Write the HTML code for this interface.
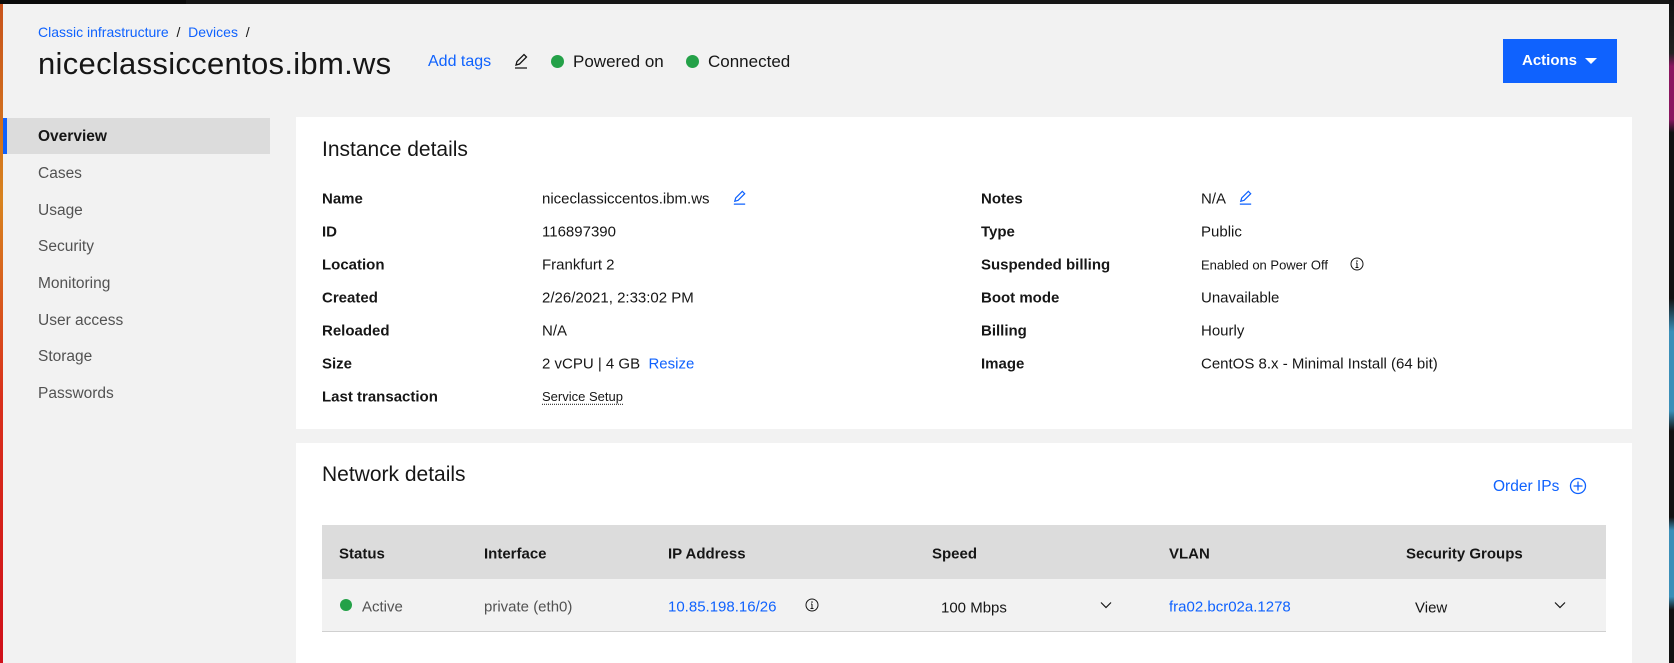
<!DOCTYPE html>
<html><head><meta charset="utf-8"><style>
*{margin:0;padding:0;box-sizing:border-box}
body{width:1674px;height:663px;overflow:hidden;background:#f2f2f2;font-family:"Liberation Sans",sans-serif;color:#161616;position:relative}
.a{position:absolute;white-space:nowrap}
.c{transform:translateY(-45%)}
.blue{color:#0f62fe}
.side{font-size:15.5px;color:#525252;left:38px}
.lbl{font-size:15px;font-weight:bold;left:322px}
.val{font-size:15px;left:542px}
.lbl2{font-size:15px;font-weight:bold;left:981px}
.val2{font-size:15px;left:1201px}
.th{font-size:15px;font-weight:bold}
.td{font-size:15px}
</style></head><body>
<div class="a" style="left:0;top:0;width:1674px;height:4px;background:#161616"></div>
<div class="a" style="left:0;top:0;width:186px;height:4px;background:#0b0b0b"></div>
<div class="a" style="left:0;top:4px;width:3px;height:659px;background:linear-gradient(#c8531c,#d8831f 30%,#d9301c 60%,#d0101a)"></div>
<div class="a" style="left:1669px;top:0;width:5px;height:663px;background:linear-gradient(#111 0,#222 8%,#8a1660 10%,#8a1660 18%,#111 20%,#111 45%,#3a8fb8 50%,#3a8fb8 62%,#111 65%,#111 78%,#3a8fb8 80%,#3a8fb8 90%,#111 92%)"></div>

<div class="a c blue" style="left:38px;top:31px;font-size:14px">Classic infrastructure <span style="color:#161616">&nbsp;/&nbsp;</span> Devices <span style="color:#161616">&nbsp;/</span></div>
<div class="a c" style="left:38px;top:62px;font-size:31px;letter-spacing:0.3px">niceclassiccentos.ibm.ws</div>
<div class="a c blue" style="left:428px;top:61px;font-size:16px">Add tags</div>
<svg class="a" style="left:512px;top:52px" width="18" height="18" viewBox="0 0 18 18"><path d="M4 13 L5 9.5 L12 2.5 L14.5 5 L7.5 12 Z M3 16 H15" fill="none" stroke="#161616" stroke-width="1.3"/></svg>
<div class="a" style="left:551px;top:55px;width:13px;height:13px;border-radius:50%;background:#24a148"></div>
<div class="a c" style="left:573px;top:61px;font-size:17px">Powered on</div>
<div class="a" style="left:686px;top:55px;width:13px;height:13px;border-radius:50%;background:#24a148"></div>
<div class="a c" style="left:708px;top:61px;font-size:17px">Connected</div>
<div class="a" style="left:1503px;top:39px;width:114px;height:44px;background:#0f62fe;color:#fff;font-size:15px;font-weight:bold;line-height:44px;padding-left:19px">Actions <span style="display:inline-block;width:0;height:0;border-left:6px solid transparent;border-right:6px solid transparent;border-top:6px solid #fff;vertical-align:middle;margin-left:4px"></span></div>

<div class="a" style="left:3px;top:118px;width:267px;height:36px;background:#dcdcdc;border-left:4px solid #0f62fe"></div>
<div class="a c side" style="top:136px;color:#161616;font-weight:bold">Overview</div>
<div class="a c side" style="top:173px">Cases</div>
<div class="a c side" style="top:210px">Usage</div>
<div class="a c side" style="top:246px">Security</div>
<div class="a c side" style="top:283px">Monitoring</div>
<div class="a c side" style="top:320px">User access</div>
<div class="a c side" style="top:356px">Storage</div>
<div class="a c side" style="top:393px">Passwords</div>

<div class="a" style="left:296px;top:117px;width:1336px;height:312px;background:#fff"></div>
<div class="a c" style="left:322px;top:149px;font-size:21px">Instance details</div>
<div class="a c lbl" style="top:198px">Name</div>
<div class="a c val" style="top:198px">niceclassiccentos.ibm.ws</div>
<svg class="a" style="left:731px;top:189px" width="17" height="17" viewBox="0 0 18 18"><path d="M4 13 L5 9.5 L12 2.5 L14.5 5 L7.5 12 Z M3 16 H15" fill="none" stroke="#0f62fe" stroke-width="1.3"/></svg>
<div class="a c lbl" style="top:231px">ID</div><div class="a c val" style="top:231px">116897390</div>
<div class="a c lbl" style="top:264px">Location</div><div class="a c val" style="top:264px">Frankfurt 2</div>
<div class="a c lbl" style="top:297px">Created</div><div class="a c val" style="top:297px">2/26/2021, 2:33:02 PM</div>
<div class="a c lbl" style="top:330px">Reloaded</div><div class="a c val" style="top:330px">N/A</div>
<div class="a c lbl" style="top:363px">Size</div><div class="a c val" style="top:363px">2 vCPU | 4 GB &nbsp;<span class="blue">Resize</span></div>
<div class="a c lbl" style="top:396px">Last transaction</div><div class="a c val" style="top:396px;font-size:13px;border-bottom:1px dotted #161616">Service Setup</div>

<div class="a c lbl2" style="top:198px">Notes</div>
<div class="a c val2" style="top:198px">N/A</div>
<svg class="a" style="left:1237px;top:189px" width="17" height="17" viewBox="0 0 18 18"><path d="M4 13 L5 9.5 L12 2.5 L14.5 5 L7.5 12 Z M3 16 H15" fill="none" stroke="#0f62fe" stroke-width="1.3"/></svg>
<div class="a c lbl2" style="top:231px">Type</div><div class="a c val2" style="top:231px">Public</div>
<div class="a c lbl2" style="top:264px">Suspended billing</div><div class="a c val2" style="top:264px;font-size:13px">Enabled on Power Off</div>
<svg class="a" style="left:1350px;top:257px" width="14" height="14" viewBox="0 0 14 14"><circle cx="7" cy="7" r="6" fill="none" stroke="#161616"/><path d="M7 6V10.5M5.5 10.5H8.5M6 6H7" stroke="#161616" fill="none"/><circle cx="7" cy="4" r=".8" fill="#161616"/></svg>
<div class="a c lbl2" style="top:297px">Boot mode</div><div class="a c val2" style="top:297px">Unavailable</div>
<div class="a c lbl2" style="top:330px">Billing</div><div class="a c val2" style="top:330px">Hourly</div>
<div class="a c lbl2" style="top:363px">Image</div><div class="a c val2" style="top:363px">CentOS 8.x - Minimal Install (64 bit)</div>

<div class="a" style="left:296px;top:443px;width:1336px;height:220px;background:#fff"></div>
<div class="a c" style="left:322px;top:474px;font-size:21px">Network details</div>
<div class="a c blue" style="left:1493px;top:486px;font-size:15.5px">Order IPs</div>
<svg class="a" style="left:1569px;top:477px" width="18" height="18" viewBox="0 0 18 18"><circle cx="9" cy="9" r="7.5" fill="none" stroke="#0f62fe" stroke-width="1.3"/><path d="M9 4.5V13.5M4.5 9H13.5" stroke="#0f62fe" stroke-width="1.3"/></svg>

<div class="a" style="left:322px;top:525px;width:1284px;height:54px;background:#dcdcdc"></div>
<div class="a" style="left:322px;top:579px;width:1284px;height:53px;background:#f2f2f2;border-bottom:1px solid #d0d0d0"></div>
<div class="a c th" style="left:339px;top:553px">Status</div>
<div class="a c th" style="left:484px;top:553px">Interface</div>
<div class="a c th" style="left:668px;top:553px">IP Address</div>
<div class="a c th" style="left:932px;top:553px">Speed</div>
<div class="a c th" style="left:1169px;top:553px">VLAN</div>
<div class="a c th" style="left:1406px;top:553px">Security Groups</div>

<div class="a" style="left:340px;top:599px;width:12px;height:12px;border-radius:50%;background:#24a148"></div>
<div class="a c td" style="left:362px;top:606px;color:#525252">Active</div>
<div class="a c td" style="left:484px;top:606px;color:#525252">private (eth0)</div>
<div class="a c td blue" style="left:668px;top:606px">10.85.198.16/26</div>
<svg class="a" style="left:805px;top:598px" width="14" height="14" viewBox="0 0 14 14"><circle cx="7" cy="7" r="6" fill="none" stroke="#161616"/><path d="M7 6V10.5M5.5 10.5H8.5M6 6H7" stroke="#161616" fill="none"/><circle cx="7" cy="4" r=".8" fill="#161616"/></svg>
<div class="a c td" style="left:941px;top:607px">100 Mbps</div>
<svg class="a" style="left:1100px;top:601px" width="12" height="8" viewBox="0 0 12 8"><path d="M1 1.5L6 6.5L11 1.5" fill="none" stroke="#161616" stroke-width="1.2"/></svg>
<div class="a c td blue" style="left:1169px;top:606px">fra02.bcr02a.1278</div>
<div class="a c td" style="left:1415px;top:607px">View</div>
<svg class="a" style="left:1554px;top:601px" width="12" height="8" viewBox="0 0 12 8"><path d="M1 1.5L6 6.5L11 1.5" fill="none" stroke="#161616" stroke-width="1.2"/></svg>
</body></html>
